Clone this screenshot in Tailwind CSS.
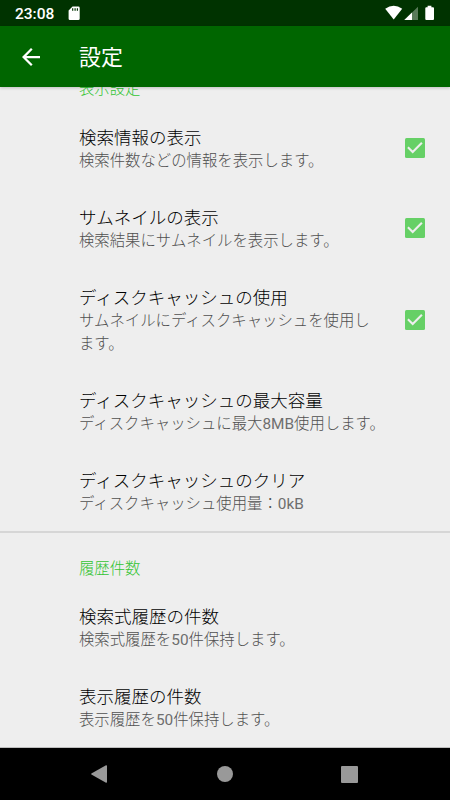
<!DOCTYPE html>
<html lang="ja">
<head>
<meta charset="utf-8">
<title>設定</title>
<script src="https://cdn.jsdelivr.net/npm/@tailwindcss/browser@4"></script>
</head>
<body class="bg-[#eeeeee]">
<div class="w-[450px] h-[800px] flex flex-col overflow-hidden bg-[#eeeeee] font-[Roboto,'Noto_Sans_CJK_JP',sans-serif]">
  <div class="h-[26px] shrink-0 bg-[#003300] flex items-center text-white pl-[15px] pr-[15px]">
    <span class="text-[15.5px] font-medium leading-[26px] pt-[2px] w-[53px]">23:08</span>
    <svg class="w-[12px] h-[15px]" viewBox="0 0 12 15"><path fill="#fff" fill-rule="evenodd" d="M4.5 .5H10.3Q11.7 .5 11.7 1.900V12.700Q11.7 14.100 10.3 14.100H2Q.6 14.100 .6 12.700V4.500ZM4.1 2.300V4.800H5.3V2.300ZM6.5 2.300V4.800H7.7V2.300ZM8.8 2.300V4.800H10V2.300Z"/></svg>
    <svg class="ml-auto w-[50px] h-[16px]" viewBox="0 0 50 16"><path fill="#fff" d="M8.7 14.4L.2 3.7Q8.700-2.2 17.200 3.700Z"/><path fill="#fff" fill-opacity=".35" d="M33 1.800V15H19.300Z"/><path fill="#fff" d="M27 7.600V15H19.300Z"/><path fill="#fff" d="M42.600 2.300V.8H46.400V2.300H48Q49 2.300 49 3.300V14Q49 15 48 15H41.300Q40.300 15 40.300 14V3.300Q40.300 2.300 41.300 2.300Z"/></svg>
  </div>
  <header class="h-[61px] shrink-0 bg-[#006600] flex items-center text-white relative z-10 shadow-[0_1px_3px_rgba(0,0,0,0.2)]">
    <svg class="ml-[22px] w-[18px] h-[18px]" viewBox="4 4 16 16"><path fill="#fff" d="M20 11H7.83l5.59-5.590L12 4l-8 8 8 8 1.410-1.410L7.830 13H20v-2z"/></svg>
    <h1 class="ml-[39px] pt-[2px] text-[21.9px] leading-[30px]">設定</h1>
  </header>
  <main class="h-[661px] shrink-0 overflow-hidden border-b border-[#bdbdbd] text-[15.38px] leading-[23px] font-light text-[#505050]">
    <h2 class="-mt-[9px] mb-[9px] pl-[79px] text-[#33c433]">表示設定</h2>
    <div class="flex items-center h-[80px] pl-[79px] pr-[25px]">
      <div class="flex-1"><h3 class="text-[17.5px] leading-[20px] mb-[2px] text-black">検索情報の表示</h3><p>検索件数などの情報を表示します。</p></div>
      <svg class="w-[20px] h-[20px] mb-[4px]" viewBox="0 0 20 20"><rect width="20" height="20" rx="1.500" fill="#66d066"/><path d="M2.900 9.300L7.700 14L16.900 4.800" fill="none" stroke="#eee" stroke-width="2.100"/></svg>
    </div>
    <div class="flex items-center h-[80px] pl-[79px] pr-[25px]">
      <div class="flex-1"><h3 class="text-[17.5px] leading-[20px] mb-[2px] text-black">サムネイルの表示</h3><p>検索結果にサムネイルを表示します。</p></div>
      <svg class="w-[20px] h-[20px] mb-[4px]" viewBox="0 0 20 20"><rect width="20" height="20" rx="1.500" fill="#66d066"/><path d="M2.900 9.300L7.700 14L16.900 4.800" fill="none" stroke="#eee" stroke-width="2.100"/></svg>
    </div>
    <div class="flex items-center h-[103px] pl-[79px] pr-[25px]">
      <div class="flex-1"><h3 class="text-[17.5px] leading-[20px] mb-[2px] text-black">ディスクキャッシュの使用</h3><p>サムネイルにディスクキャッシュを使用し<br>ます。</p></div>
      <svg class="w-[20px] h-[20px] mb-[4px]" viewBox="0 0 20 20"><rect width="20" height="20" rx="1.500" fill="#66d066"/><path d="M2.900 9.300L7.700 14L16.900 4.800" fill="none" stroke="#eee" stroke-width="2.100"/></svg>
    </div>
    <div class="flex items-center h-[80px] pl-[79px]">
      <div><h3 class="text-[17.5px] leading-[20px] mb-[2px] text-black">ディスクキャッシュの最大容量</h3><p>ディスクキャッシュに最大<span class="font-normal text-[#6e6e6e]">8MB</span>使用します。</p></div>
    </div>
    <div class="flex items-center h-[78px] pl-[79px] pt-[2px]">
      <div><h3 class="text-[17.5px] leading-[20px] mb-[2px] text-black">ディスクキャッシュのクリア</h3><p>ディスクキャッシュ使用量：<span class="font-normal text-[#6e6e6e]">0kB</span></p></div>
    </div>
    <div class="h-[58px] border-t-2 border-[#d6d6d6] pt-[25px] pl-[79px]"><h2 class="text-[#33c433]">履歴件数</h2></div>
    <div class="flex items-center h-[80px] pl-[79px]">
      <div><h3 class="text-[17.5px] leading-[20px] mb-[2px] text-black">検索式履歴の件数</h3><p>検索式履歴を<span class="font-normal text-[#6e6e6e]">50</span>件保持します。</p></div>
    </div>
    <div class="flex items-center h-[80px] pl-[79px]">
      <div><h3 class="text-[17.5px] leading-[20px] mb-[2px] text-black">表示履歴の件数</h3><p>表示履歴を<span class="font-normal text-[#6e6e6e]">50</span>件保持します。</p></div>
    </div>
  </main>
  <nav class="h-[52px] shrink-0 bg-black flex items-center justify-between pl-[91px] pr-[92px]">
    <svg class="w-[16px] h-[18px]" viewBox="0 0 16 18"><path fill="#999" d="M.4 8.500Q0 9 .4 9.400L15 17.800Q16 18 16 17V1Q16 0 15 .200Z"/></svg>
    <span class="w-[16px] h-[16px] rounded-full bg-[#999] relative left-px"></span>
    <span class="w-[17px] h-[17px] rounded-[1px] bg-[#999]"></span>
  </nav>
</div>
</body>
</html>
